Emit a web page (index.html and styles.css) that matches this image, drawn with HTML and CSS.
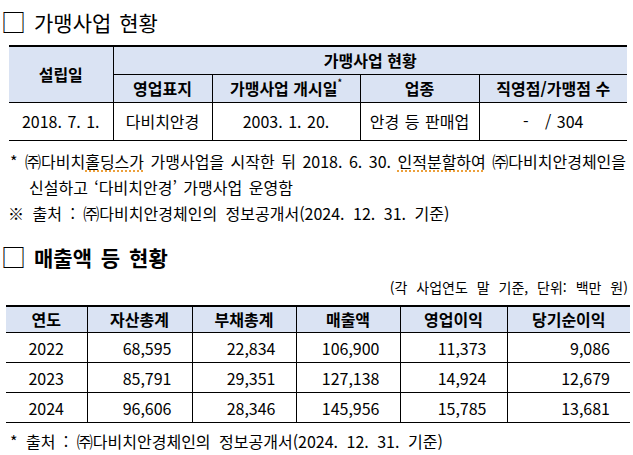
FILE: index.html
```html
<!DOCTYPE html>
<html lang="ko">
<head>
<meta charset="utf-8">
<link rel="stylesheet" href="styles.css">
</head>
<body>
<div class="page">
  <h2 class="title title-1"><span class="box">□</span>가맹사업 현황</h2>
  <table class="grid grid-fr">
    <colgroup>
      <col class="c104"><col class="c99"><col class="c148"><col class="c119"><col class="c148">
    </colgroup>
    <tr class="h1">
      <th rowspan="2" class="first">설립일</th>
      <th colspan="4" class="last">가맹사업 현황</th>
    </tr>
    <tr class="h2">
      <th>영업표지</th>
      <th>가맹사업 개시일<sup>*</sup></th>
      <th>업종</th>
      <th class="last">직영점/가맹점 수</th>
    </tr>
    <tr class="d1">
      <td class="first">2018. 7. 1.</td>
      <td>다비치안경</td>
      <td>2003. 1. 20.</td>
      <td>안경 등 판매업</td>
      <td class="last">-&nbsp;&nbsp;&nbsp;/ 304</td>
    </tr>
  </table>
  <div class="notes">
    <p class="hang"><span class="mark">*</span><span class="nw">㈜다비치<u class="sq">홀딩스가</u> 가맹사업을 시작한 뒤 2018. 6. 30. <u class="sq">인적분할하여</u> ㈜다비치안경체인을</span><br><span class="nw">신설하고 ‘다비치안경’ 가맹사업 운영함</span></p>
    <p class="src">※ 출처 : ㈜다비치안경체인의 정보공개서(2024. 12. 31. 기준)</p>
  </div>
  <h2 class="title title-2"><span class="box">□</span>매출액 등 현황</h2>
  <div class="unit">(각 사업연도 말 기준, 단위: 백만 원)</div>
  <table class="grid grid-fin">
    <colgroup>
      <col class="c81"><col class="c105"><col class="c104"><col class="c104"><col class="c107"><col class="c123">
    </colgroup>
    <tr class="fh">
      <th class="first">연도</th><th>자산총계</th><th>부채총계</th><th>매출액</th><th>영업이익</th><th class="last">당기순이익</th>
    </tr>
    <tr class="fr">
      <td class="first ctr">2022</td><td>68,595</td><td>22,834</td><td>106,900</td><td>11,373</td><td class="last">9,086</td>
    </tr>
    <tr class="fr">
      <td class="first ctr">2023</td><td>85,791</td><td>29,351</td><td>127,138</td><td>14,924</td><td class="last">12,679</td>
    </tr>
    <tr class="fr">
      <td class="first ctr">2024</td><td>96,606</td><td>28,346</td><td>145,956</td><td>15,785</td><td class="last">13,681</td>
    </tr>
  </table>
  <p class="note-end">* 출처 : ㈜다비치안경체인의 정보공개서(2024. 12. 31. 기준)</p>
</div>
</body>
</html>
```

FILE: styles.css
```css
html, body {
  margin: 0;
  padding: 0;
  background: #fff;
}
body {
  font-family: "Noto Sans CJK KR", "Noto Sans", sans-serif;
  color: #000;
}
.page {
  width: 633px;
  height: 455px;
  overflow: hidden;
}
.title {
  margin: 0;
  height: 30px;
  line-height: 30px;
  font-size: 21px;
  white-space: nowrap;
  padding-left: 1px;
  word-spacing: 2px;
}
.title .box {
  font-weight: 400;
  font-size: 25px;
  line-height: 0;
  vertical-align: -1px;
  margin-right: 8px;
}
.title-1 {
  margin-top: 7px;
  font-weight: 400;
}
.title-2 {
  margin-top: 16px;
  font-weight: 700;
  word-spacing: 3px;
}
.grid {
  border-collapse: collapse;
  table-layout: fixed;
  font-size: 16px;
}
.grid th,
.grid td {
  padding: 0;
  border: 1px solid #000;
  text-align: center;
  white-space: nowrap;
  overflow: hidden;
}
.grid th {
  background: #dae3f3;
  font-weight: 700;
}
.grid tr:first-child th {
  border-top: 2px solid #000;
}
.grid .first { border-left: none; }
.grid .last { border-right: none; }

.grid-fr {
  margin: 8px 0 0 9px;
  width: 618px;
}
.grid-fr th sup {
  font-size: 9px;
  vertical-align: top;
  line-height: 1;
  position: relative;
  top: 2px;
}
.grid-fr .h1 { height: 28px; }
.grid-fr .h2 { height: 28px; }
.grid-fr .d1 { height: 38px; }
.grid-fr td { font-weight: 400; word-spacing: 1px; }

.c104 { width: 104px; }
.c99 { width: 99px; }
.c148 { width: 148px; }
.c119 { width: 119px; }
.c81 { width: 81px; }
.c105 { width: 105px; }
.c107 { width: 107px; }
.c123 { width: 123px; }

.notes {
  margin-top: 7px;
  font-size: 16px;
  line-height: 26px;
}
.notes p { margin: 0; }
.nw { white-space: nowrap; }
.hang {
  padding-left: 29px;
  text-indent: -19px;
  word-spacing: 2px;
  white-space: nowrap;
}
.hang .mark {
  display: inline-block;
  text-indent: 0;
  width: 15px;
}
.src { padding-left: 8px; word-spacing: 4px; white-space: nowrap; }
.sq {
  text-decoration: underline dotted #e8890c;
  text-underline-offset: 3px;
}

.unit {
  margin-top: 5px;
  height: 20px;
  line-height: 20px;
  font-size: 14px;
  text-align: right;
  padding-right: 5px;
  word-spacing: 5px;
  white-space: nowrap;
}
.grid-fin {
  margin: 8px 0 0 6px;
  width: 624px;
}
.grid-fin .fh { height: 27px; }
.grid-fin .fr { height: 30px; }
.grid-fin td {
  text-align: right;
  padding-right: 20px;
}
.grid-fin td.ctr {
  text-align: center;
  padding-right: 0;
}
.grid-fin tr:last-child td { border-bottom: 1.5px solid #000; }
.note-end {
  margin: 5px 0 0 10px;
  font-size: 16px;
  line-height: 26px;
  word-spacing: 4px;
  white-space: nowrap;
}
```
